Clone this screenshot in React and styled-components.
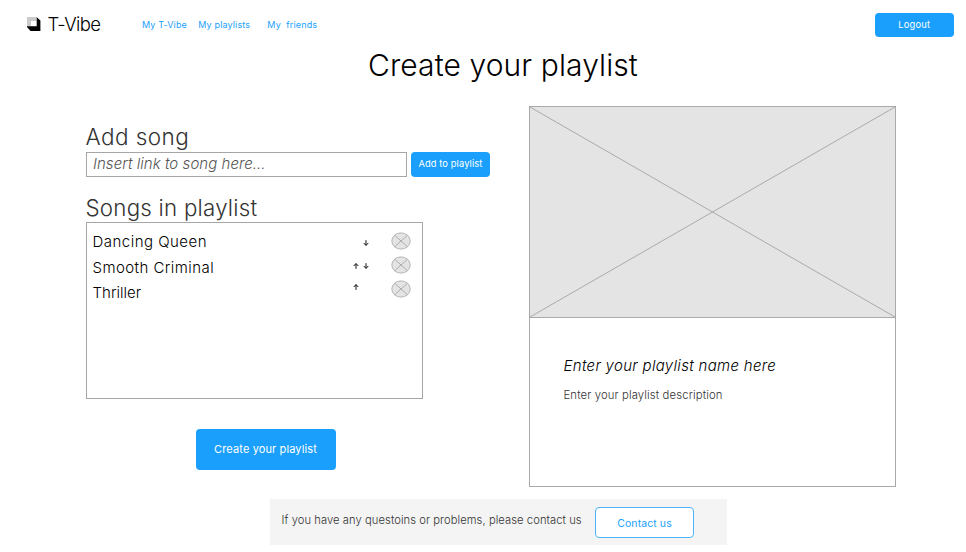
import React from "react";
import styled, { createGlobalStyle } from "styled-components";

const BLUE = "#1a9ffd";

const GlobalStyle = createGlobalStyle`
  * { box-sizing: border-box; }
  body { margin: 0; background: #fff; }
`;

const Page = styled.div`
  width: 966px;
  height: 552px;
  overflow: hidden;
  display: flex;
  flex-direction: column;
  background: #fff;
  font-family: Inter, "Open Sans", sans-serif;
  color: #000;
`;

const Text = styled.span`
  display: block;
  white-space: pre;
  font-size: ${(p) => p.$size}px;
  font-weight: ${(p) => p.$weight || 300};
  font-style: ${(p) => (p.$italic ? "italic" : "normal")};
  letter-spacing: ${(p) => p.$spacing || 0}px;
  line-height: ${(p) => p.$line || 20}px;
  color: ${(p) => p.$color || "inherit"};
`;

const Header = styled.header`
  height: 50px;
  flex: none;
  display: flex;
  align-items: center;
  padding: 0 12px 0 26px;
`;

const Brand = styled.div`
  display: flex;
  align-items: center;
  width: 116px;
  height: 48px;
  padding-bottom: 2px;
  gap: 6.5px;
`;

const Nav = styled.nav`
  display: grid;
  grid-template-columns: 56.3px 69px auto;
  flex: 1;
`;

const NavLink = styled(Text).attrs({ as: "a" })`
  color: ${BLUE};
`;

const Button = styled.button`
  flex: none;
  display: flex;
  align-items: center;
  justify-content: center;
  padding: 0;
  width: ${(p) => p.$width}px;
  height: ${(p) => p.$height}px;
  border: ${(p) => (p.$outline ? "1px solid #4cb4fb" : "0")};
  border-radius: 4px;
  background: ${(p) => (p.$outline ? "#fff" : BLUE)};
  color: ${(p) => (p.$outline ? BLUE : "#fff")};
  font-family: inherit;
`;

const Title = styled(Text).attrs({ as: "h1" })`
  margin: -3px 0 0 368px;
`;

const Columns = styled.main`
  display: flex;
  flex: none;
  height: 381px;
  margin-top: 23px;
  padding-left: 85.5px;
`;

const Editor = styled.section`
  width: 443.5px;
  padding-top: 16px;
`;

const Heading = styled(Text).attrs({ as: "h2" })`
  margin: 0;
  color: #333;
`;

const AddRow = styled.div`
  display: flex;
  gap: 3.5px;
  height: 25px;
  margin-bottom: 17px;
`;

const LinkField = styled.div`
  width: 321.7px;
  height: 25px;
  border: 1px solid #a6a6a6;
  padding: 0 6.5px;
`;

const SongList = styled.div`
  display: grid;
  grid-template-columns: 259.5px 38.7px 20px;
  width: 337.5px;
  height: 177px;
  border: 1px solid #a6a6a6;
  padding-left: 6px;
  margin-bottom: 30px;
`;

const Titles = styled.div`
  padding-top: 6px;
`;

const Arrows = styled.div`
  display: grid;
  grid-template-columns: 10.4px 10.4px;
  grid-template-rows: 24px 22px 20px;
  align-content: start;
  align-items: center;
  padding-top: 8px;
`;

const Removers = styled.div`
  display: flex;
  flex-direction: column;
  gap: 6px;
  padding-top: 9px;
`;

const CreateRow = styled.div`
  padding-left: 110.5px;
`;

const CreateLabel = styled(Text)`
  margin: 0 1px 2px 0;
`;

const Preview = styled.section`
  width: 367px;
  height: 381px;
  border: 1px solid #aaa;
`;

const Cover = styled.div`
  height: 211px;
  background: #e4e4e4;
  border-bottom: 1px solid #aaa;
  svg { display: block; }
`;

const Details = styled.div`
  padding: 38px 0 0 33.5px;
`;

const Footer = styled.footer`
  display: flex;
  flex: none;
  width: 457px;
  height: 46px;
  margin: 12px 0 0 270px;
  padding: 8px 0 0 11.5px;
  background: #f4f4f4;
`;

const FooterText = styled.div`
  width: 313.5px;
  padding-top: 3px;
`;

const ContactLabel = styled(Text)`
  margin-top: 3px;
`;

const Logo = () => (
  <svg width="15" height="16" viewBox="0 0 15 16">
    <path d="M1 1H11V10.5H1Z" fill="#cbcbcb" />
    <path d="M5 5H10.3V10.3H5Z" fill="#fff" />
    <path d="M10.8 1.2 14.4 4.5V15H4.5L1 11V10.3H10.8Z" fill="#000" />
  </svg>
);

const Arrow = ({ up }) => (
  <svg width="8" height="8" viewBox="0 0 8 8">
    <path
      d={up ? "M4 6.8V1.6M1.7 4 4 1.6 6.3 4" : "M4 1.2V6.4M1.7 4 4 6.4 6.3 4"}
      fill="none"
      stroke="#111"
      strokeWidth="1"
    />
  </svg>
);

const RemoveIcon = () => (
  <svg width="20" height="18" viewBox="0 0 20 18">
    <ellipse cx="10" cy="9" rx="9.2" ry="8.1" fill="#e4e4e4" stroke="#a6a6a6" strokeWidth="0.8" />
    <path d="M3.6 3.3 16.4 14.7M16.4 3.3 3.6 14.7" stroke="#a6a6a6" strokeWidth="0.9" />
  </svg>
);

export default function App() {
  return (
    <Page>
      <GlobalStyle />
      <Header>
        <Brand>
          <Logo />
          <Text $size={18.5} $spacing={-0.6}>T-Vibe</Text>
        </Brand>
        <Nav>
          <NavLink $size={9} $weight={400} $spacing={0.13}>My T-Vibe</NavLink>
          <NavLink $size={9} $weight={400} $spacing={0.14}>My playlists</NavLink>
          <NavLink $size={9} $weight={400} $spacing={0.16}>{"My  friends"}</NavLink>
        </Nav>
        <Button $width={79.5} $height={24.5}>
          <Text $size={9.3} $spacing={0.25} $weight={400}>Logout</Text>
        </Button>
      </Header>
      <Title $size={30} $spacing={0.1} $line={36}>Create your playlist</Title>
      <Columns>
        <Editor>
          <Heading $size={22.5} $spacing={0.45} $line={30}>Add song</Heading>
          <AddRow>
            <LinkField>
              <Text $size={15} $spacing={0.05} $line={22} $italic $color="#555">Insert link to song here...</Text>
            </LinkField>
            <Button $width={79.5} $height={24.5}>
              <Text $size={9.3} $spacing={0.12} $weight={400}>Add to playlist</Text>
            </Button>
          </AddRow>
          <Heading $size={22.3} $spacing={0.24} $line={28}>Songs in playlist</Heading>
          <SongList>
            <Titles>
              <Text $size={15} $spacing={0.48} $line={25.6}>Dancing Queen</Text>
              <Text $size={15} $spacing={0.44} $line={25.6}>Smooth Criminal</Text>
              <Text $size={15} $spacing={0.02} $line={25.6}>Thriller</Text>
            </Titles>
            <Arrows>
              <span /><Arrow />
              <Arrow up /><Arrow />
              <Arrow up />
            </Arrows>
            <Removers>
              <RemoveIcon />
              <RemoveIcon />
              <RemoveIcon />
            </Removers>
          </SongList>
          <CreateRow>
            <Button $width={140} $height={41}>
              <CreateLabel $size={11} $spacing={0.12} $weight={400}>Create your playlist</CreateLabel>
            </Button>
          </CreateRow>
        </Editor>
        <Preview>
          <Cover>
            <svg width="365" height="210" viewBox="0 0 365 210">
              <path d="M0 0 365 210M365 0 0 210" stroke="#aaa" strokeWidth="1" />
            </svg>
          </Cover>
          <Details>
            <Text $size={15} $spacing={0.31} $italic>Enter your playlist name here</Text>
            <Text $size={11.3} $spacing={0.13} $line={39} $color="#333">Enter your playlist description</Text>
          </Details>
        </Preview>
      </Columns>
      <Footer>
        <FooterText>
          <Text $size={11.2} $spacing={0.07} $color="#333">If you have any questoins or problems, please contact us</Text>
        </FooterText>
        <Button $width={99} $height={30.5} $outline>
          <ContactLabel $size={10.5} $spacing={0.09} $weight={400}>Contact us</ContactLabel>
        </Button>
      </Footer>
    </Page>
  );
}
